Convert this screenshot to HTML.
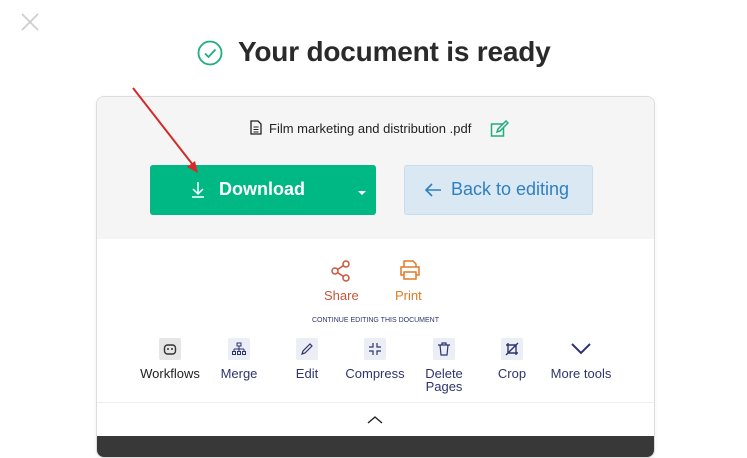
<!DOCTYPE html>
<html><head><style>
body{margin:0;width:747px;height:450px;background:#fff;font-family:"Liberation Sans",sans-serif;position:relative;overflow:hidden}
.a{position:absolute}
.card{left:96px;top:96px;width:557px;height:360px;border:1px solid #ddd;border-radius:8px;background:#fff;overflow:hidden;box-shadow:0 1px 4px rgba(0,0,0,.06)}
.top{left:0;top:0;width:557px;height:142px;background:#f4f5f4}
.tool{position:absolute;top:241px;width:80px;text-align:center;font-size:13px;color:#2d3470;line-height:13px}
.box{width:22px;height:22px;margin:0 auto 7px;background:#eceef5;border-radius:2px;display:flex;align-items:center;justify-content:center}
</style></head><body>
<svg class="a" style="left:21px;top:13px" width="18" height="18"><path d="M1 1L17 17M17 1L1 17" stroke="#ccc" stroke-width="1.6"/></svg>
<svg class="a" style="left:197px;top:40px" width="26" height="26"><circle cx="13" cy="13" r="11.5" fill="none" stroke="#1fae80" stroke-width="1.8"/><path d="M8 13.5l3.5 3.5 7-7.5" fill="none" stroke="#1fae80" stroke-width="1.8"/></svg>
<div class="a" style="left:238px;top:36px;font-size:28px;font-weight:bold;color:#2a2a2a;letter-spacing:-0.2px">Your document is ready</div>
<div class="a card">
 <div class="a top"></div>
 <svg class="a" style="left:153px;top:23px" width="12" height="15"><path d="M1 1h7l3 3v10H1z" fill="none" stroke="#222" stroke-width="1.3"/><path d="M3.5 7h5M3.5 9.5h5M3.5 12h5" stroke="#222"/></svg>
 <div class="a" style="left:172px;top:24px;font-size:13px;color:#222">Film marketing and distribution .pdf</div>
 <svg class="a" style="left:393px;top:23px" width="20" height="18"><rect x="1.5" y="4" width="12" height="12" fill="none" stroke="#1fae80" stroke-width="1.5"/><path d="M7 12l1-3 8-8 2 2-8 8z" fill="#fff" stroke="#1fae80" stroke-width="1.5"/></svg>
 <div class="a" style="left:53px;top:68px;width:226px;height:50px;background:#00b884;border-radius:3px"></div>
 <svg class="a" style="left:93px;top:84px" width="16" height="18"><path d="M8 1v12M3 8l5 5 5-5M2 16h12" fill="none" stroke="#fff" stroke-width="1.5"/></svg>
 <div class="a" style="left:122px;top:82px;font-size:18px;font-weight:bold;color:#fff">Download</div>
 <div class="a" style="left:261px;top:94px;border:4px solid transparent;border-top:4px solid #fff"></div>
 <div class="a" style="left:307px;top:68px;width:187px;height:48px;background:#dae8f3;border:1px solid #c7dcec;border-radius:3px"></div>
 <svg class="a" style="left:327px;top:85px" width="18" height="16"><path d="M17 8H2M8 2L2 8l6 6" fill="none" stroke="#2f7fc1" stroke-width="1.6"/></svg>
 <div class="a" style="left:354px;top:82px;font-size:18px;color:#2f7fc1">Back to editing</div>
 <svg class="a" style="left:234px;top:163px" width="20" height="22"><circle cx="15" cy="4" r="3" fill="none" stroke="#c9553a" stroke-width="1.5"/><circle cx="4" cy="11" r="3" fill="none" stroke="#c9553a" stroke-width="1.5"/><circle cx="15" cy="18" r="3" fill="none" stroke="#c9553a" stroke-width="1.5"/><path d="M6.5 9.5l6-4M6.5 12.5l6 4" stroke="#c9553a" stroke-width="1.5"/></svg>
 <div class="a" style="left:227px;top:191px;font-size:13px;color:#c9553a">Share</div>
 <svg class="a" style="left:302px;top:163px" width="22" height="20"><path d="M5 7V1h9l3 3v3M5 15H2V7h18v8h-3M5 12h12v7H5z" fill="none" stroke="#e07a26" stroke-width="1.5"/></svg>
 <div class="a" style="left:298px;top:191px;font-size:13px;color:#e07a26">Print</div>
 <div class="a" style="left:0;width:557px;top:220px;text-align:center;font-size:7px;color:#2d3470">CONTINUE EDITING THIS DOCUMENT</div>
 <div class="tool" style="left:33px;color:#222"><div class="box" style="background:#e6e6e6"><svg width="14" height="12"><rect x="1.5" y="2" width="11" height="9" rx="3" fill="none" stroke="#333" stroke-width="1.4"/><circle cx="5" cy="6" r="1" fill="#333"/><circle cx="9" cy="6" r="1" fill="#333"/></svg></div>Workflows</div>
 <div class="tool" style="left:102px"><div class="box"><svg width="14" height="14" fill="none" stroke="#2d3470"><rect x="5" y="1" width="4" height="3"/><path d="M7 4v3M2 7h10M2 7v2M7 7v2M12 7v2"/><rect x="0.5" y="9.5" width="3" height="3"/><rect x="5.5" y="9.5" width="3" height="3"/><rect x="10.5" y="9.5" width="3" height="3"/></svg></div>Merge</div>
 <div class="tool" style="left:170px"><div class="box"><svg width="14" height="14"><path d="M2 12l1-3 7-7 2 2-7 7z" fill="none" stroke="#2d3470" stroke-width="1.2"/></svg></div>Edit</div>
 <div class="tool" style="left:238px"><div class="box"><svg width="14" height="14" fill="none" stroke="#2d3470" stroke-width="1.2"><path d="M5 1v4H1M9 1v4h4M5 13V9H1M9 13V9h4"/></svg></div>Compress</div>
 <div class="tool" style="left:307px"><div class="box"><svg width="14" height="14" fill="none" stroke="#2d3470" stroke-width="1.2"><path d="M1 3h12M5 3V1h4v2M3 3l1 10h6l1-10"/></svg></div>Delete<br>Pages</div>
 <div class="tool" style="left:375px"><div class="box"><svg width="14" height="14" fill="none" stroke="#2d3470" stroke-width="1.4"><path d="M3 1v10h10M1 3h10v10M1 13L13 1"/></svg></div>Crop</div>
 <div class="tool" style="left:444px"><div class="box" style="background:none"><svg width="22" height="14"><path d="M2 2l9 9 9-9" fill="none" stroke="#2d3470" stroke-width="2"/></svg></div>More tools</div>
 <div class="a" style="left:0;top:305px;width:557px;height:1px;background:#eee"></div>
 <svg class="a" style="left:270px;top:318px" width="16" height="10"><path d="M1 8l7-6 7 6" fill="none" stroke="#222" stroke-width="1.4"/></svg>
 <div class="a" style="left:0;top:339px;width:557px;height:30px;background:#383838"></div>
</div>
<svg class="a" style="left:0;top:0" width="747" height="450"><path d="M133 88L193 165" stroke="#d42a2a" stroke-width="2"/><path d="M198 173l-11-6 8-6z" fill="#d42a2a"/></svg>
</body></html>
